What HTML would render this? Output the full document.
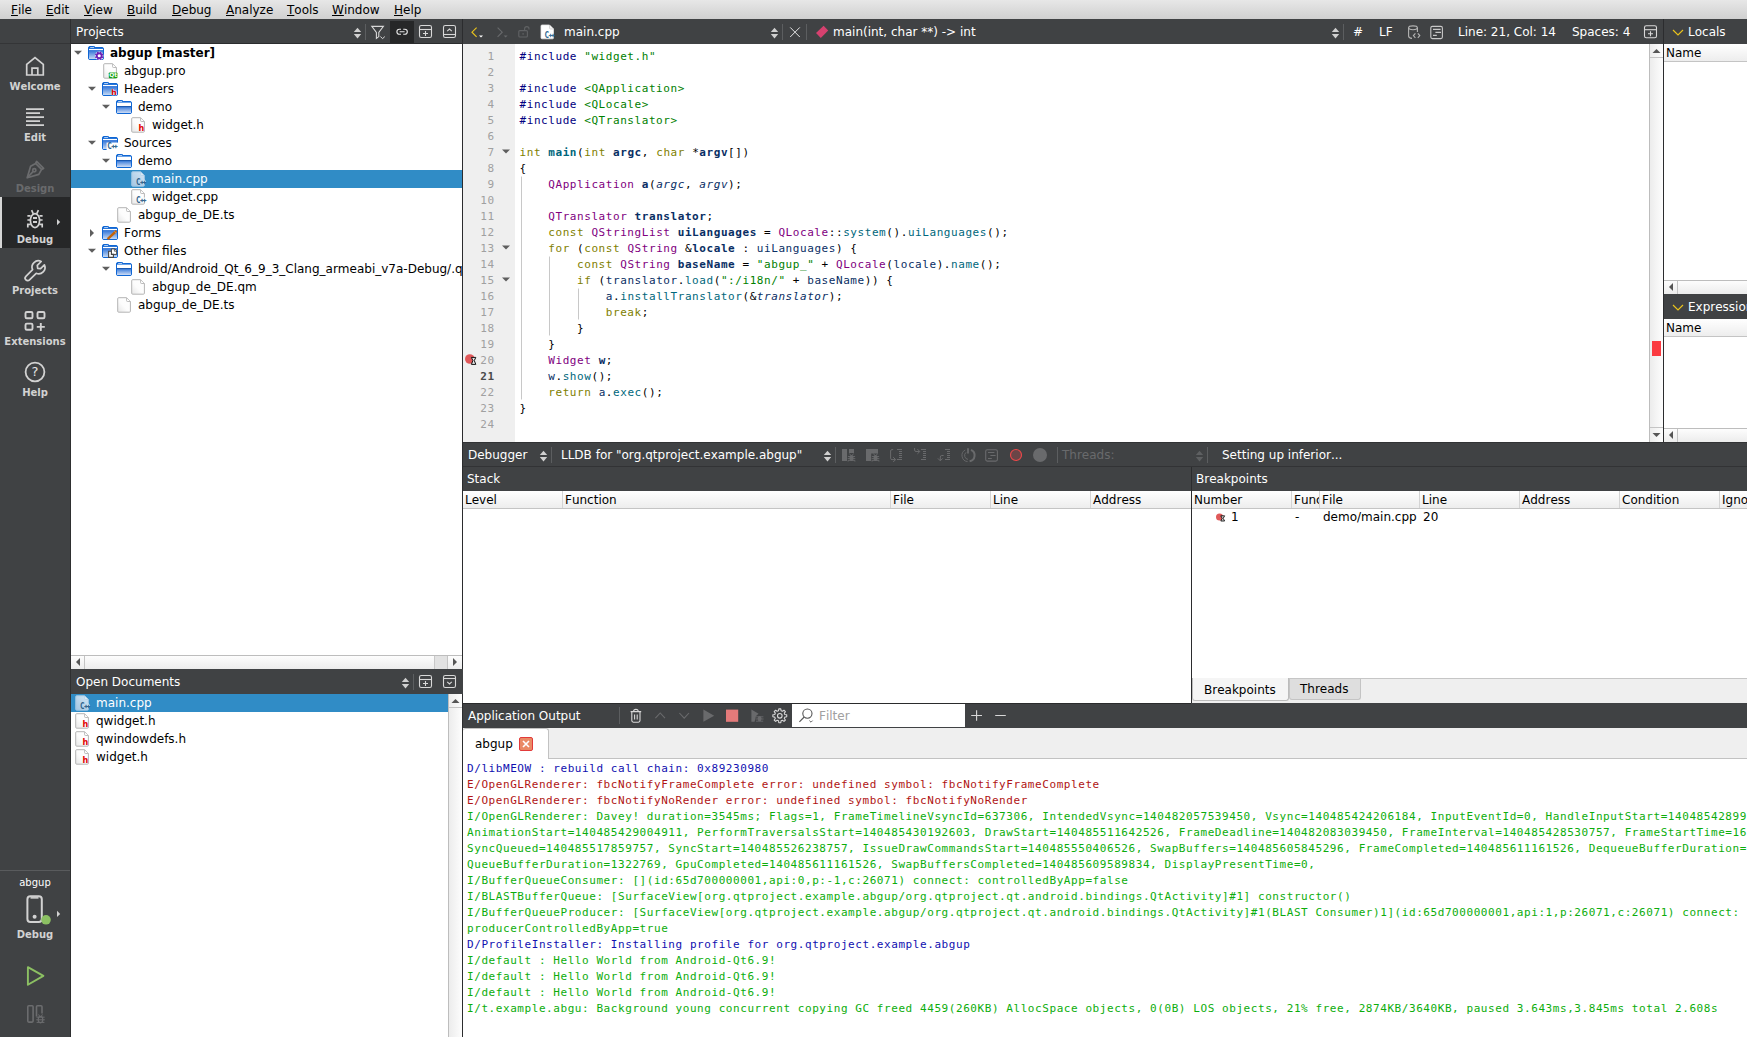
<!DOCTYPE html>
<html><head><meta charset="utf-8"><title>main.cpp @ abgup [master] - Qt Creator</title>
<style>
*{box-sizing:border-box;margin:0;padding:0}
html,body{width:1747px;height:1037px;overflow:hidden;background:#fff}
body{position:relative;font-family:"DejaVu Sans","Liberation Sans",sans-serif;font-size:12px;color:#000;line-height:1;font-kerning:none}
.abs{position:absolute}
.dark{background:#404244;color:#fff}
.mono{font-family:"DejaVu Sans Mono","Liberation Mono",monospace;letter-spacing:0.568px}
/* menubar */
#menubar{left:0;top:0;width:1747px;height:19px;background:linear-gradient(#e7e7e7,#d0d0d0)}
#menubar span{position:absolute;top:4px;font-size:12px;white-space:nowrap}
#menubar u{text-decoration:underline;text-underline-offset:1px}
/* sidebar */
#sidebar{left:0;top:19px;width:71px;height:1018px;background:#404244;border-right:1px solid #2e2f30}
.lbl{position:absolute;left:0;width:70px;text-align:center;color:#d2d2d2;font-weight:bold;font-size:10px;white-space:nowrap}
.lbl.dis{color:#696a6c}
.mode{position:absolute;left:0;width:70px;height:51px;text-align:center;color:#d0d0d0;font-weight:bold;font-size:10px}
.mode .lbl{position:absolute;left:0;width:70px;text-align:center;top:37px}
.mode svg{position:absolute;left:23px;top:8px}
.mode.sel{background:#262728;border-left:3px solid #d6d6d6}
.mode.dis{color:#6d6e70}
/* generic header bars */
.bar{background:#404244;color:#fff;white-space:nowrap}
.bar .t{position:absolute;top:7px;font-size:12px}
/* tree */
.row{position:absolute;left:0;height:18px;width:100%;white-space:nowrap}
.tx{position:absolute;font-size:12px;white-space:nowrap}
.row.sel{background:#308cc6;color:#fff}
/* header */
.hdr{position:absolute;height:18px;background:linear-gradient(#ffffff,#ededed);border-bottom:1px solid #c4c4c4;font-size:12px;white-space:nowrap;overflow:hidden}
.hdr span{position:absolute;top:0;height:17px;padding:3px 0 0 2px;border-left:1px solid #d4d4d4;overflow:hidden}
.hdr span:first-child{border-left:none}
/* code */
#code .ln{position:absolute;left:0;height:16px;white-space:pre;font-size:11px;line-height:16px}
#out .ln{position:absolute;left:4px;height:16px;white-space:pre;font-size:11px;line-height:16px}
</style></head><body>
<div id="menubar" class="abs">
<span style="left:11px"><u>F</u>ile</span><span style="left:46px"><u>E</u>dit</span><span style="left:84px"><u>V</u>iew</span><span style="left:127px"><u>B</u>uild</span><span style="left:172px"><u>D</u>ebug</span><span style="left:226px"><u>A</u>nalyze</span><span style="left:287px"><u>T</u>ools</span><span style="left:332px"><u>W</u>indow</span><span style="left:394px"><u>H</u>elp</span>
</div>
<div id="sidebar" class="abs">
<!-- coordinates inside sidebar are page-y minus 19 -->
<svg class="abs" style="left:0;top:0" width="70" height="1018" viewBox="0 19 70 1018" fill="none" stroke="#d2d2d2" stroke-width="1.7">
<rect x="0" y="197" width="70" height="51" fill="#262728" stroke="none"/>
<rect x="0" y="197" width="2" height="51" fill="#d6d6d6" stroke="none"/>
<!-- welcome -->
<path d="M26.7,75 V64.4 L35,57.6 L43.3,64.4 V75 Z M32,75 V68.2 H37.8 V75" stroke-linejoin="miter"/>
<!-- edit -->
<path d="M26,109.2 H44 M26,113.2 H40 M26,117.2 H44 M26,121.2 H40 M26,125.2 H44" stroke-width="1.8"/>
<!-- design (disabled) -->
<g stroke="#6b6c6e" stroke-width="1.7" stroke-linejoin="round">
<path d="M27.2,177.8 L30.6,166.2 L35.6,163.4 L41.6,169.4 L38.8,174.4 Z"/>
<path d="M35.6,163.4 L36.6,161.4 L43.6,168.4 L41.6,169.4"/>
<path d="M27.6,177.4 L33.2,171.4"/>
<circle cx="34.3" cy="170.2" r="1.6"/>
</g>
<!-- debug bug -->
<g stroke-width="1.7">
<ellipse cx="35" cy="220.6" rx="4.6" ry="7"/>
<path d="M33,218 H37 M33,222 H37" stroke-width="1.8"/>
<path d="M31.6,210.2 L33.2,213.6 M38.4,210.2 L36.8,213.6"/>
<path d="M27.4,215.9 H30.6 M27.4,220 H30.4 M27.8,227.6 V224.4 H30.8 M42.6,215.9 H39.4 M42.6,220 H39.6 M42.2,227.6 V224.4 H39.2"/>
</g>
<path d="M57,219 L60.2,222.1 L57,225.2 Z" fill="#d2d2d2" stroke="none"/>
<!-- projects wrench -->
<path d="M25.9,276.3 L32.6,269.7 A6.3,6.3 0 0 1 41.2,261.5 L37.3,265.4 L37.7,268.3 L40.6,268.7 L44.4,264.9 A6.3,6.3 0 0 1 36.2,273.3 L29.5,279.9 A2.5,2.5 0 0 1 25.9,276.3 Z" stroke-width="1.7" stroke-linejoin="round"/>
<!-- extensions -->
<g stroke-width="1.9">
<rect x="25.5" y="312" width="7" height="6.2" rx="1.3"/>
<rect x="37.5" y="312" width="7" height="6.2" rx="1.3"/>
<rect x="25.5" y="323.6" width="7" height="6.2" rx="1.3"/>
<path d="M36.8,326.9 H44.8 M40.8,322.9 V330.9"/>
</g>
<!-- help -->
<circle cx="35" cy="372" r="9.4" stroke-width="1.8"/>
<!-- kit selector phone -->
<g stroke-width="2">
<rect x="27.4" y="896.2" width="14.4" height="25.8" rx="3"/>
<path d="M30.5,897.6 H38.5" stroke-width="2.2" stroke="#c8c8c8"/>
<circle cx="34.6" cy="916.8" r="2" fill="#d2d2d2" stroke="none"/>
</g>
<circle cx="46" cy="919.8" r="4.8" fill="#8cc063" stroke="none"/>
<path d="M57,910.8 L60.2,913.9 L57,917 Z" fill="#d2d2d2" stroke="none"/>
<!-- run -->
<path d="M27.9,967.2 L43.4,975.9 L27.9,984.8 Z" stroke="#8cc063" stroke-width="1.9" stroke-linejoin="round"/>
<!-- debug run (disabled) -->
<g stroke="#6b6c6e" stroke-width="1.6">
<rect x="27.8" y="1005.8" width="5.3" height="16.3" rx="1"/>
<path d="M36.5,1016.4 V1006.8 Q36.5,1005.8 37.5,1005.8 H41 Q42,1005.8 42,1006.8 V1013.4"/>
<ellipse cx="40.5" cy="1019.6" rx="2.3" ry="3.2" stroke-width="1.2"/>
<path d="M36.4,1017.2 H44.6 M36.2,1019.8 H44.8 M36.6,1022.4 H44.4 M38.6,1014.4 L39.6,1016.2 M42.4,1014.4 L41.4,1016.2" stroke-width="1"/>
</g>
<path d="M0,870.5 H70" stroke="#595b5d" stroke-width="1"/><path d="M0,43.5 H70" stroke="#343537" stroke-width="1"/>
</svg>
<div class="lbl" style="top:63px">Welcome</div>
<div class="lbl" style="top:114px">Edit</div>
<div class="lbl dis" style="top:165px">Design</div>
<div class="lbl" style="top:216px">Debug</div>
<div class="lbl" style="top:267px">Projects</div>
<div class="lbl" style="top:318px">Extensions</div>
<div class="lbl" style="top:369px">Help</div>
<div class="lbl" style="top:346px;font-weight:normal;font-size:13px;color:#e4e4e4">?</div>
<div class="lbl" style="top:859px;font-weight:normal;font-size:10px;color:#fff">abgup</div>
<div class="lbl" style="top:911px">Debug</div>
</div>
<div class="abs bar" style="left:71px;top:19px;width:392px;height:25px;border-bottom:1px solid #2b2c2e"><span class="t" style="left:5px">Projects</span></div>
<div class="abs" style="left:462px;top:19px;width:1px;height:1018px;background:#2b2c2e"></div>
<div class="abs" style="left:390px;top:21px;width:24px;height:22px;background:#262728"></div>
<div class="abs" style="left:71px;top:44px;width:391px;height:611px;overflow:hidden;background:#fff">
<div class="tx" style="left:39px;top:3px;font-weight:bold;">abgup [master]</div>
<div class="tx" style="left:53px;top:21px;">abgup.pro</div>
<div class="tx" style="left:53px;top:39px;">Headers</div>
<div class="tx" style="left:67px;top:57px;">demo</div>
<div class="tx" style="left:81px;top:75px;">widget.h</div>
<div class="tx" style="left:53px;top:93px;">Sources</div>
<div class="tx" style="left:67px;top:111px;">demo</div>
<div class="row sel" style="top:126px"></div>
<div class="tx" style="left:81px;top:129px;color:#fff;">main.cpp</div>
<div class="tx" style="left:81px;top:147px;">widget.cpp</div>
<div class="tx" style="left:67px;top:165px;">abgup_de_DE.ts</div>
<div class="tx" style="left:53px;top:183px;">Forms</div>
<div class="tx" style="left:53px;top:201px;">Other files</div>
<div class="tx" style="left:67px;top:219px;">build/Android_Qt_6_9_3_Clang_armeabi_v7a-Debug/.qm</div>
<div class="tx" style="left:81px;top:237px;">abgup_de_DE.qm</div>
<div class="tx" style="left:67px;top:255px;">abgup_de_DE.ts</div>
</div>
<div class="abs" style="left:71px;top:655px;width:391px;height:14px;background:linear-gradient(#fdfdfd,#ececec);border-top:1px solid #bdbdbd"></div>
<div class="abs" style="left:84px;top:656px;width:1px;height:13px;background:#c4c4c4"></div>
<div class="abs" style="left:447px;top:656px;width:1px;height:13px;background:#c4c4c4"></div>
<div class="abs" style="left:434px;top:656px;width:13px;height:13px;background:#e2e2e2;border-left:1px solid #c8c8c8"></div>
<div class="abs bar" style="left:71px;top:669px;width:392px;height:25px"><span class="t" style="left:5px">Open Documents</span></div>
<div class="abs" style="left:71px;top:694px;width:391px;height:343px;overflow:hidden;background:#fff">
<div class="row sel" style="top:0;width:377px"></div>
<div class="tx" style="left:25px;top:3px;color:#fff;">main.cpp</div>
<div class="tx" style="left:25px;top:21px;">qwidget.h</div>
<div class="tx" style="left:25px;top:39px;">qwindowdefs.h</div>
<div class="tx" style="left:25px;top:57px;">widget.h</div>
</div>
<div class="abs" style="left:448px;top:694px;width:14px;height:343px;background:linear-gradient(90deg,#ececec,#fdfdfd);border-left:1px solid #bdbdbd"></div>
<div class="abs" style="left:449px;top:707px;width:13px;height:1px;background:#c4c4c4"></div>
<svg class="abs" style="left:0;top:0;pointer-events:none" width="1747" height="1037" viewBox="0 0 1747 1037"><defs>
<linearGradient id="fg" x1="0" y1="0" x2="0" y2="1"><stop offset="0" stop-color="#2a6fd6"/><stop offset="1" stop-color="#c4d9f4"/></linearGradient>
<linearGradient id="fg2" x1="0" y1="0" x2="0" y2="1"><stop offset="0" stop-color="#3d7edb"/><stop offset="1" stop-color="#cfddf5"/></linearGradient>
<linearGradient id="pg" x1="1" y1="0" x2="0" y2="1"><stop offset="0" stop-color="#ffffff"/><stop offset="0.55" stop-color="#fcfcfc"/><stop offset="1" stop-color="#e6e6e6"/></linearGradient>
<linearGradient id="pgs" x1="1" y1="0" x2="0" y2="1"><stop offset="0" stop-color="#d4e6f4"/><stop offset="1" stop-color="#a4c6e2"/></linearGradient>
</defs><path d="M353.8,31.9 H361.2 L357.5,27.7 Z" fill="#d0d0d0"/><path d="M353.8,34.1 H361.2 L357.5,38.4 Z" fill="#d0d0d0"/><path d="M365.5,24 V40" stroke="#5c5e60" stroke-width="1"/><path d="M371.8,26.4 H383.4 L378.8,32.4 V36.6 L376.4,38.4 V32.4 Z" fill="none" stroke="#d8d8d8" stroke-width="1.1" stroke-linejoin="miter"/><path d="M380.4,36.6 L382.6,38.6 L384.8,36.6" fill="none" stroke="#d8d8d8" stroke-width="1"/><path d="M401,29.2 H399.4 A2.5,2.5 0 0 0 399.4,34.2 H401 M403.2,29.2 H404.8 A2.5,2.5 0 0 1 404.8,34.2 H403.2 M399.6,31.7 H404.6" fill="none" stroke="#e8e8e8" stroke-width="1.15"/><g fill="none" stroke="#d8d8d8" stroke-width="1.1"><rect x="419.5" y="25.5" width="12" height="12" rx="1.8"/><path d="M419.5,29.5 H431.5"/><path d="M423,33.5 H428 M425.5,31 V36"/></g><g fill="none" stroke="#d8d8d8" stroke-width="1.1"><rect x="443.5" y="25.5" width="12" height="12" rx="1.8"/><path d="M443.5,34.5 H455.5"/><path d="M447.2,31.2 L449.5,29 L451.8,31.2"/></g><path d="M74,50.8 H82 L78,54.8 Z" fill="#5e5e5e"/><g transform="translate(88,46)"><path d="M0.5,12.3 V1.9 Q0.5,0.5 1.9,0.5 H5.8 Q6.8,0.5 7.1,1.5 H14.1 Q15.5,1.5 15.5,2.9 V12.3 Q15.5,13.5 14.1,13.5 H1.9 Q0.5,13.5 0.5,12.3 Z" fill="#0f66d4" stroke="#0f66d4" stroke-width="1"/><rect x="1" y="4.1" width="14" height="8.9" fill="url(#fg)"/><rect x="1" y="2.9" width="14" height="1.2" fill="#ffffff"/><rect x="2" y="1.2" width="4.2" height="0.8" rx="0.4" fill="#e4eefb"/><g transform="translate(11.2,9.8)" fill="none"><circle cx="0" cy="0" r="4.4" fill="#fff" fill-opacity="0.75"/><circle cx="0" cy="0" r="2.4" stroke="#6a1fb5" stroke-width="1.7" fill="#fff"/><path d="M2.59,1.07 L3.97,1.65" stroke="#6a1fb5" stroke-width="1.6"/><path d="M1.07,2.59 L1.65,3.97" stroke="#6a1fb5" stroke-width="1.6"/><path d="M-1.07,2.59 L-1.65,3.97" stroke="#6a1fb5" stroke-width="1.6"/><path d="M-2.59,1.07 L-3.97,1.65" stroke="#6a1fb5" stroke-width="1.6"/><path d="M-2.59,-1.07 L-3.97,-1.65" stroke="#6a1fb5" stroke-width="1.6"/><path d="M-1.07,-2.59 L-1.65,-3.97" stroke="#6a1fb5" stroke-width="1.6"/><path d="M1.07,-2.59 L1.65,-3.97" stroke="#6a1fb5" stroke-width="1.6"/><path d="M2.59,-1.07 L3.97,-1.65" stroke="#6a1fb5" stroke-width="1.6"/></g></g><g transform="translate(102,63)"><path d="M1.7,1.7 Q1.7,0.7 2.7,0.7 H10.6 L14.4,4.5 V14.2 Q14.4,15.2 13.4,15.2 H2.7 Q1.7,15.2 1.7,14.2 Z" fill="url(#pg)" stroke="#b4b4b4" stroke-width="1"/><path d="M10.6,0.9 V3.7 Q10.6,4.5 11.4,4.5 H14.2" fill="#fff" stroke="#b4b4b4" stroke-width="0.9"/><rect x="6.8" y="9.4" width="8.6" height="5.8" rx="0.8" fill="#14a014"/><text x="7.2" y="14.3" font-family="DejaVu Sans" font-weight="bold" font-size="5.9" fill="#fff">Qt</text></g><path d="M88,86.8 H96 L92,90.8 Z" fill="#5e5e5e"/><g transform="translate(102,82)"><path d="M0.5,12.3 V1.9 Q0.5,0.5 1.9,0.5 H5.8 Q6.8,0.5 7.1,1.5 H14.1 Q15.5,1.5 15.5,2.9 V12.3 Q15.5,13.5 14.1,13.5 H1.9 Q0.5,13.5 0.5,12.3 Z" fill="#0f66d4" stroke="#0f66d4" stroke-width="1"/><rect x="1" y="4.1" width="14" height="8.9" fill="url(#fg)"/><rect x="1" y="2.9" width="14" height="1.2" fill="#ffffff"/><rect x="2" y="1.2" width="4.2" height="0.8" rx="0.4" fill="#e4eefb"/><text x="9.2" y="13.3" font-family="DejaVu Sans" font-weight="bold" font-size="7.6" fill="#e00000" stroke="#fff" stroke-width="0.5" paint-order="stroke">h</text></g><path d="M102,104.8 H110 L106,108.8 Z" fill="#5e5e5e"/><g transform="translate(116,100)"><path d="M0.5,12.3 V1.9 Q0.5,0.5 1.9,0.5 H5.8 Q6.8,0.5 7.1,1.5 H14.1 Q15.5,1.5 15.5,2.9 V12.3 Q15.5,13.5 14.1,13.5 H1.9 Q0.5,13.5 0.5,12.3 Z" fill="#0f66d4" stroke="#0f66d4" stroke-width="1"/><rect x="1" y="7" width="14" height="6" fill="url(#fg2)"/><rect x="1" y="6" width="14" height="1.1" fill="#1c59b0"/><rect x="1" y="2.9" width="14" height="3.1" fill="#ffffff"/><rect x="1" y="2.2" width="14" height="0.8" fill="#7fb0ec"/><rect x="2" y="1.2" width="4.2" height="0.8" rx="0.4" fill="#e4eefb"/></g><g transform="translate(130,117)"><path d="M1.7,1.7 Q1.7,0.7 2.7,0.7 H10.6 L14.4,4.5 V14.2 Q14.4,15.2 13.4,15.2 H2.7 Q1.7,15.2 1.7,14.2 Z" fill="url(#pg)" stroke="#b4b4b4" stroke-width="1"/><path d="M10.6,0.9 V3.7 Q10.6,4.5 11.4,4.5 H14.2" fill="#fff" stroke="#b4b4b4" stroke-width="0.9"/><text x="8.4" y="14" font-family="DejaVu Sans" font-weight="bold" font-size="8" fill="#e00000">h</text></g><path d="M88,140.8 H96 L92,144.8 Z" fill="#5e5e5e"/><g transform="translate(102,136)"><path d="M0.5,12.3 V1.9 Q0.5,0.5 1.9,0.5 H5.8 Q6.8,0.5 7.1,1.5 H14.1 Q15.5,1.5 15.5,2.9 V12.3 Q15.5,13.5 14.1,13.5 H1.9 Q0.5,13.5 0.5,12.3 Z" fill="#0f66d4" stroke="#0f66d4" stroke-width="1"/><rect x="1" y="4.1" width="14" height="8.9" fill="url(#fg)"/><rect x="1" y="2.9" width="14" height="1.2" fill="#ffffff"/><rect x="2" y="1.2" width="4.2" height="0.8" rx="0.4" fill="#e4eefb"/><rect x="4.6" y="6.6" width="11.8" height="7.8" fill="#fff"/><text x="5.4" y="13.3" font-family="DejaVu Sans" font-weight="bold" font-size="8" fill="#2c5f8a" textLength="4.2" lengthAdjust="spacingAndGlyphs">C</text><text x="9.15" y="12.4" font-family="DejaVu Sans" font-weight="bold" font-size="4.8" fill="#2c5f8a" stroke="#2c5f8a" stroke-width="0.3">+</text><text x="11.65" y="12.4" font-family="DejaVu Sans" font-weight="bold" font-size="4.8" fill="#2c5f8a" stroke="#2c5f8a" stroke-width="0.3">+</text></g><path d="M102,158.8 H110 L106,162.8 Z" fill="#5e5e5e"/><g transform="translate(116,154)"><path d="M0.5,12.3 V1.9 Q0.5,0.5 1.9,0.5 H5.8 Q6.8,0.5 7.1,1.5 H14.1 Q15.5,1.5 15.5,2.9 V12.3 Q15.5,13.5 14.1,13.5 H1.9 Q0.5,13.5 0.5,12.3 Z" fill="#0f66d4" stroke="#0f66d4" stroke-width="1"/><rect x="1" y="7" width="14" height="6" fill="url(#fg2)"/><rect x="1" y="6" width="14" height="1.1" fill="#1c59b0"/><rect x="1" y="2.9" width="14" height="3.1" fill="#ffffff"/><rect x="1" y="2.2" width="14" height="0.8" fill="#7fb0ec"/><rect x="2" y="1.2" width="4.2" height="0.8" rx="0.4" fill="#e4eefb"/></g><g transform="translate(130,171)"><path d="M1.7,1.7 Q1.7,0.7 2.7,0.7 H10.6 L14.4,4.5 V14.2 Q14.4,15.2 13.4,15.2 H2.7 Q1.7,15.2 1.7,14.2 Z" fill="url(#pgs)" stroke="#9cc4e2" stroke-width="1"/><path d="M10.6,0.9 V3.7 Q10.6,4.5 11.4,4.5 H14.2" fill="#dbe9f5" stroke="#b4d2ea" stroke-width="0.9"/><path d="M13.4,8.6 H14.6 L16.2,10.6 L14.6,12.8 H13.4 Z" fill="#c6def0" stroke="none"/><text x="6.2" y="14" font-family="DejaVu Sans" font-weight="bold" font-size="8" fill="#2c5f8a" textLength="4.2" lengthAdjust="spacingAndGlyphs">C</text><text x="9.95" y="13.1" font-family="DejaVu Sans" font-weight="bold" font-size="4.8" fill="#2c5f8a" stroke="#2c5f8a" stroke-width="0.3">+</text><text x="12.45" y="13.1" font-family="DejaVu Sans" font-weight="bold" font-size="4.8" fill="#2c5f8a" stroke="#2c5f8a" stroke-width="0.3">+</text></g><g transform="translate(130,189)"><path d="M1.7,1.7 Q1.7,0.7 2.7,0.7 H10.6 L14.4,4.5 V14.2 Q14.4,15.2 13.4,15.2 H2.7 Q1.7,15.2 1.7,14.2 Z" fill="url(#pg)" stroke="#b4b4b4" stroke-width="1"/><path d="M10.6,0.9 V3.7 Q10.6,4.5 11.4,4.5 H14.2" fill="#fff" stroke="#b4b4b4" stroke-width="0.9"/><path d="M13.4,8.6 H14.6 L16.2,10.6 L14.6,12.8 H13.4 Z" fill="#fff" stroke="none"/><text x="6.2" y="14" font-family="DejaVu Sans" font-weight="bold" font-size="8" fill="#2c5f8a" textLength="4.2" lengthAdjust="spacingAndGlyphs">C</text><text x="9.95" y="13.1" font-family="DejaVu Sans" font-weight="bold" font-size="4.8" fill="#2c5f8a" stroke="#2c5f8a" stroke-width="0.3">+</text><text x="12.45" y="13.1" font-family="DejaVu Sans" font-weight="bold" font-size="4.8" fill="#2c5f8a" stroke="#2c5f8a" stroke-width="0.3">+</text></g><g transform="translate(116,207)"><path d="M1.7,1.7 Q1.7,0.7 2.7,0.7 H10.6 L14.4,4.5 V14.2 Q14.4,15.2 13.4,15.2 H2.7 Q1.7,15.2 1.7,14.2 Z" fill="url(#pg)" stroke="#b4b4b4" stroke-width="1"/><path d="M10.6,0.9 V3.7 Q10.6,4.5 11.4,4.5 H14.2" fill="#fff" stroke="#b4b4b4" stroke-width="0.9"/></g><path d="M90,229 V237 L94,233 Z" fill="#5e5e5e"/><g transform="translate(102,226)"><path d="M0.5,12.3 V1.9 Q0.5,0.5 1.9,0.5 H5.8 Q6.8,0.5 7.1,1.5 H14.1 Q15.5,1.5 15.5,2.9 V12.3 Q15.5,13.5 14.1,13.5 H1.9 Q0.5,13.5 0.5,12.3 Z" fill="#0f66d4" stroke="#0f66d4" stroke-width="1"/><rect x="1" y="4.1" width="14" height="8.9" fill="url(#fg)"/><rect x="1" y="2.9" width="14" height="1.2" fill="#ffffff"/><rect x="2" y="1.2" width="4.2" height="0.8" rx="0.4" fill="#e4eefb"/><path d="M5.6,13.2 L14.4,4.8" stroke="#c46408" stroke-width="2.5"/><path d="M12.6,5.4 L14,6.8" stroke="#e8c8a0" stroke-width="0.7"/></g><path d="M88,248.8 H96 L92,252.8 Z" fill="#5e5e5e"/><g transform="translate(102,244)"><path d="M0.5,12.3 V1.9 Q0.5,0.5 1.9,0.5 H5.8 Q6.8,0.5 7.1,1.5 H14.1 Q15.5,1.5 15.5,2.9 V12.3 Q15.5,13.5 14.1,13.5 H1.9 Q0.5,13.5 0.5,12.3 Z" fill="#0f66d4" stroke="#0f66d4" stroke-width="1"/><rect x="1" y="4.1" width="14" height="8.9" fill="url(#fg)"/><rect x="1" y="2.9" width="14" height="1.2" fill="#ffffff"/><rect x="2" y="1.2" width="4.2" height="0.8" rx="0.4" fill="#e4eefb"/><path d="M9.4,4.9 H12.8 L14.7,6.8 V10.4 H9.4 Z" fill="#fff" stroke="#444" stroke-width="1"/><path d="M12.4,5 V7.2 H14.6" fill="none" stroke="#444" stroke-width="0.8"/><path d="M6.6,7.2 H9.4 V10.4 H11.4 V13.4 H6.6 Z" fill="#fff" stroke="#444" stroke-width="1.1"/></g><path d="M102,266.8 H110 L106,270.8 Z" fill="#5e5e5e"/><g transform="translate(116,262)"><path d="M0.5,12.3 V1.9 Q0.5,0.5 1.9,0.5 H5.8 Q6.8,0.5 7.1,1.5 H14.1 Q15.5,1.5 15.5,2.9 V12.3 Q15.5,13.5 14.1,13.5 H1.9 Q0.5,13.5 0.5,12.3 Z" fill="#0f66d4" stroke="#0f66d4" stroke-width="1"/><rect x="1" y="7" width="14" height="6" fill="url(#fg2)"/><rect x="1" y="6" width="14" height="1.1" fill="#1c59b0"/><rect x="1" y="2.9" width="14" height="3.1" fill="#ffffff"/><rect x="1" y="2.2" width="14" height="0.8" fill="#7fb0ec"/><rect x="2" y="1.2" width="4.2" height="0.8" rx="0.4" fill="#e4eefb"/></g><g transform="translate(130,279)"><path d="M1.7,1.7 Q1.7,0.7 2.7,0.7 H10.6 L14.4,4.5 V14.2 Q14.4,15.2 13.4,15.2 H2.7 Q1.7,15.2 1.7,14.2 Z" fill="url(#pg)" stroke="#b4b4b4" stroke-width="1"/><path d="M10.6,0.9 V3.7 Q10.6,4.5 11.4,4.5 H14.2" fill="#fff" stroke="#b4b4b4" stroke-width="0.9"/></g><g transform="translate(116,297)"><path d="M1.7,1.7 Q1.7,0.7 2.7,0.7 H10.6 L14.4,4.5 V14.2 Q14.4,15.2 13.4,15.2 H2.7 Q1.7,15.2 1.7,14.2 Z" fill="url(#pg)" stroke="#b4b4b4" stroke-width="1"/><path d="M10.6,0.9 V3.7 Q10.6,4.5 11.4,4.5 H14.2" fill="#fff" stroke="#b4b4b4" stroke-width="0.9"/></g><path d="M80,658 V666 L76,662 Z" fill="#555555"/><path d="M453,658 V666 L457,662 Z" fill="#555555"/><path d="M401.8,681.9 H409.2 L405.5,677.7 Z" fill="#d0d0d0"/><path d="M401.8,684.1 H409.2 L405.5,688.4 Z" fill="#d0d0d0"/><path d="M413.5,674 V690" stroke="#5c5e60" stroke-width="1"/><g fill="none" stroke="#d8d8d8" stroke-width="1.1"><rect x="419.5" y="675.5" width="12" height="12" rx="1.8"/><path d="M419.5,679.5 H431.5"/><path d="M423,683.5 H428 M425.5,681 V686"/></g><g fill="none" stroke="#d8d8d8" stroke-width="1.1"><rect x="443.5" y="675.5" width="12" height="12" rx="1.8"/><path d="M443.5,678.5 H455.5"/><path d="M447.2,681.8 L449.5,684 L451.8,681.8"/></g><g transform="translate(74,695)"><path d="M1.7,1.7 Q1.7,0.7 2.7,0.7 H10.6 L14.4,4.5 V14.2 Q14.4,15.2 13.4,15.2 H2.7 Q1.7,15.2 1.7,14.2 Z" fill="url(#pgs)" stroke="#9cc4e2" stroke-width="1"/><path d="M10.6,0.9 V3.7 Q10.6,4.5 11.4,4.5 H14.2" fill="#dbe9f5" stroke="#b4d2ea" stroke-width="0.9"/><path d="M13.4,8.6 H14.6 L16.2,10.6 L14.6,12.8 H13.4 Z" fill="#c6def0" stroke="none"/><text x="6.2" y="14" font-family="DejaVu Sans" font-weight="bold" font-size="8" fill="#2c5f8a" textLength="4.2" lengthAdjust="spacingAndGlyphs">C</text><text x="9.95" y="13.1" font-family="DejaVu Sans" font-weight="bold" font-size="4.8" fill="#2c5f8a" stroke="#2c5f8a" stroke-width="0.3">+</text><text x="12.45" y="13.1" font-family="DejaVu Sans" font-weight="bold" font-size="4.8" fill="#2c5f8a" stroke="#2c5f8a" stroke-width="0.3">+</text></g><g transform="translate(74,713)"><path d="M1.7,1.7 Q1.7,0.7 2.7,0.7 H10.6 L14.4,4.5 V14.2 Q14.4,15.2 13.4,15.2 H2.7 Q1.7,15.2 1.7,14.2 Z" fill="url(#pg)" stroke="#b4b4b4" stroke-width="1"/><path d="M10.6,0.9 V3.7 Q10.6,4.5 11.4,4.5 H14.2" fill="#fff" stroke="#b4b4b4" stroke-width="0.9"/><text x="8.4" y="14" font-family="DejaVu Sans" font-weight="bold" font-size="8" fill="#e00000">h</text></g><g transform="translate(74,731)"><path d="M1.7,1.7 Q1.7,0.7 2.7,0.7 H10.6 L14.4,4.5 V14.2 Q14.4,15.2 13.4,15.2 H2.7 Q1.7,15.2 1.7,14.2 Z" fill="url(#pg)" stroke="#b4b4b4" stroke-width="1"/><path d="M10.6,0.9 V3.7 Q10.6,4.5 11.4,4.5 H14.2" fill="#fff" stroke="#b4b4b4" stroke-width="0.9"/><text x="8.4" y="14" font-family="DejaVu Sans" font-weight="bold" font-size="8" fill="#e00000">h</text></g><g transform="translate(74,749)"><path d="M1.7,1.7 Q1.7,0.7 2.7,0.7 H10.6 L14.4,4.5 V14.2 Q14.4,15.2 13.4,15.2 H2.7 Q1.7,15.2 1.7,14.2 Z" fill="url(#pg)" stroke="#b4b4b4" stroke-width="1"/><path d="M10.6,0.9 V3.7 Q10.6,4.5 11.4,4.5 H14.2" fill="#fff" stroke="#b4b4b4" stroke-width="0.9"/><text x="8.4" y="14" font-family="DejaVu Sans" font-weight="bold" font-size="8" fill="#e00000">h</text></g><path d="M451.5,703 H459.5 L455.5,699 Z" fill="#555555"/></svg>
<div class="abs bar" style="left:463px;top:19px;width:1200px;height:25px"></div>
<div class="abs" style="left:564px;top:26px;color:#fff;font-size:12px;white-space:nowrap;">main.cpp</div>
<div class="abs" style="left:833px;top:26px;color:#fff;font-size:12px;white-space:nowrap;">main(int, char **) -&gt; int</div>
<div class="abs" style="left:1353px;top:26px;color:#fff;font-size:12px;white-space:nowrap;">#</div>
<div class="abs" style="left:1379px;top:26px;color:#fff;font-size:12px;white-space:nowrap;">LF</div>
<div class="abs" style="left:1458px;top:26px;color:#fff;font-size:12px;white-space:nowrap;">Line: 21, Col: 14</div>
<div class="abs" style="left:1572px;top:26px;color:#fff;font-size:12px;white-space:nowrap;">Spaces: 4</div>
<div class="abs" style="left:463px;top:44px;width:1186px;height:398px;background:#fff"></div>
<div class="abs" style="left:463px;top:44px;width:52px;height:398px;background:#efefef"></div>
<div id="code" class="abs mono" style="left:463px;top:49px;width:1186px;height:393px;overflow:hidden">
<div class="ln" style="top:0px;left:0;width:31.6px;text-align:right;color:#a0a0a0;">1</div>
<div class="ln" style="top:0px;left:56.5px"><span style="color:#000080;">#include </span><span style="color:#008000;">"widget.h"</span></div>
<div class="ln" style="top:16px;left:0;width:31.6px;text-align:right;color:#a0a0a0;">2</div>
<div class="ln" style="top:32px;left:0;width:31.6px;text-align:right;color:#a0a0a0;">3</div>
<div class="ln" style="top:32px;left:56.5px"><span style="color:#000080;">#include </span><span style="color:#008000;">&lt;QApplication&gt;</span></div>
<div class="ln" style="top:48px;left:0;width:31.6px;text-align:right;color:#a0a0a0;">4</div>
<div class="ln" style="top:48px;left:56.5px"><span style="color:#000080;">#include </span><span style="color:#008000;">&lt;QLocale&gt;</span></div>
<div class="ln" style="top:64px;left:0;width:31.6px;text-align:right;color:#a0a0a0;">5</div>
<div class="ln" style="top:64px;left:56.5px"><span style="color:#000080;">#include </span><span style="color:#008000;">&lt;QTranslator&gt;</span></div>
<div class="ln" style="top:80px;left:0;width:31.6px;text-align:right;color:#a0a0a0;">6</div>
<div class="ln" style="top:96px;left:0;width:31.6px;text-align:right;color:#a0a0a0;">7</div>
<div class="ln" style="top:96px;left:56.5px"><span style="color:#808000;">int</span><span style="color:#000000;"> </span><span style="color:#00677c;font-weight:bold;">main</span><span style="color:#000000;">(</span><span style="color:#808000;">int</span><span style="color:#000000;"> </span><span style="color:#092e64;font-weight:bold;">argc</span><span style="color:#000000;">, </span><span style="color:#808000;">char</span><span style="color:#000000;"> *</span><span style="color:#092e64;font-weight:bold;">argv</span><span style="color:#000000;">[])</span></div>
<div class="ln" style="top:112px;left:0;width:31.6px;text-align:right;color:#a0a0a0;">8</div>
<div class="ln" style="top:112px;left:56.5px"><span style="color:#000000;">{</span></div>
<div class="ln" style="top:128px;left:0;width:31.6px;text-align:right;color:#a0a0a0;">9</div>
<div class="ln" style="top:128px;left:56.5px"><span style="color:#000000;">    </span><span style="color:#800080;">QApplication</span><span style="color:#000000;"> </span><span style="color:#092e64;font-weight:bold;">a</span><span style="color:#000000;">(</span><span style="color:#092e64;font-style:italic;">argc</span><span style="color:#000000;">, </span><span style="color:#092e64;font-style:italic;">argv</span><span style="color:#000000;">);</span></div>
<div class="ln" style="top:144px;left:0;width:31.6px;text-align:right;color:#a0a0a0;">10</div>
<div class="ln" style="top:160px;left:0;width:31.6px;text-align:right;color:#a0a0a0;">11</div>
<div class="ln" style="top:160px;left:56.5px"><span style="color:#000000;">    </span><span style="color:#800080;">QTranslator</span><span style="color:#000000;"> </span><span style="color:#092e64;font-weight:bold;">translator</span><span style="color:#000000;">;</span></div>
<div class="ln" style="top:176px;left:0;width:31.6px;text-align:right;color:#a0a0a0;">12</div>
<div class="ln" style="top:176px;left:56.5px"><span style="color:#000000;">    </span><span style="color:#808000;">const</span><span style="color:#000000;"> </span><span style="color:#800080;">QStringList</span><span style="color:#000000;"> </span><span style="color:#092e64;font-weight:bold;">uiLanguages</span><span style="color:#000000;"> = </span><span style="color:#800080;">QLocale</span><span style="color:#000000;">::</span><span style="color:#00677c;">system</span><span style="color:#000000;">().</span><span style="color:#00677c;">uiLanguages</span><span style="color:#000000;">();</span></div>
<div class="ln" style="top:192px;left:0;width:31.6px;text-align:right;color:#a0a0a0;">13</div>
<div class="ln" style="top:192px;left:56.5px"><span style="color:#000000;">    </span><span style="color:#808000;">for</span><span style="color:#000000;"> (</span><span style="color:#808000;">const</span><span style="color:#000000;"> </span><span style="color:#800080;">QString</span><span style="color:#000000;"> &amp;</span><span style="color:#092e64;font-weight:bold;">locale</span><span style="color:#000000;"> : </span><span style="color:#092e64;">uiLanguages</span><span style="color:#000000;">) {</span></div>
<div class="ln" style="top:208px;left:0;width:31.6px;text-align:right;color:#a0a0a0;">14</div>
<div class="ln" style="top:208px;left:56.5px"><span style="color:#000000;">        </span><span style="color:#808000;">const</span><span style="color:#000000;"> </span><span style="color:#800080;">QString</span><span style="color:#000000;"> </span><span style="color:#092e64;font-weight:bold;">baseName</span><span style="color:#000000;"> = </span><span style="color:#008000;">"abgup_"</span><span style="color:#000000;"> + </span><span style="color:#800080;">QLocale</span><span style="color:#000000;">(</span><span style="color:#092e64;">locale</span><span style="color:#000000;">).</span><span style="color:#00677c;">name</span><span style="color:#000000;">();</span></div>
<div class="ln" style="top:224px;left:0;width:31.6px;text-align:right;color:#a0a0a0;">15</div>
<div class="ln" style="top:224px;left:56.5px"><span style="color:#000000;">        </span><span style="color:#808000;">if</span><span style="color:#000000;"> (</span><span style="color:#092e64;">translator</span><span style="color:#000000;">.</span><span style="color:#00677c;">load</span><span style="color:#000000;">(</span><span style="color:#008000;">":/i18n/"</span><span style="color:#000000;"> + </span><span style="color:#092e64;">baseName</span><span style="color:#000000;">)) {</span></div>
<div class="ln" style="top:240px;left:0;width:31.6px;text-align:right;color:#a0a0a0;">16</div>
<div class="ln" style="top:240px;left:56.5px"><span style="color:#000000;">            </span><span style="color:#092e64;">a</span><span style="color:#000000;">.</span><span style="color:#00677c;">installTranslator</span><span style="color:#000000;">(&amp;</span><span style="color:#092e64;font-style:italic;">translator</span><span style="color:#000000;">);</span></div>
<div class="ln" style="top:256px;left:0;width:31.6px;text-align:right;color:#a0a0a0;">17</div>
<div class="ln" style="top:256px;left:56.5px"><span style="color:#000000;">            </span><span style="color:#808000;">break</span><span style="color:#000000;">;</span></div>
<div class="ln" style="top:272px;left:0;width:31.6px;text-align:right;color:#a0a0a0;">18</div>
<div class="ln" style="top:272px;left:56.5px"><span style="color:#000000;">        }</span></div>
<div class="ln" style="top:288px;left:0;width:31.6px;text-align:right;color:#a0a0a0;">19</div>
<div class="ln" style="top:288px;left:56.5px"><span style="color:#000000;">    }</span></div>
<div class="ln" style="top:304px;left:0;width:31.6px;text-align:right;color:#a0a0a0;">20</div>
<div class="ln" style="top:304px;left:56.5px"><span style="color:#000000;">    </span><span style="color:#800080;">Widget</span><span style="color:#000000;"> </span><span style="color:#092e64;font-weight:bold;">w</span><span style="color:#000000;">;</span></div>
<div class="ln" style="top:320px;left:0;width:31.6px;text-align:right;color:#4a4a4a;font-weight:bold;">21</div>
<div class="ln" style="top:320px;left:56.5px"><span style="color:#000000;">    </span><span style="color:#092e64;">w</span><span style="color:#000000;">.</span><span style="color:#00677c;">show</span><span style="color:#000000;">();</span></div>
<div class="ln" style="top:336px;left:0;width:31.6px;text-align:right;color:#a0a0a0;">22</div>
<div class="ln" style="top:336px;left:56.5px"><span style="color:#000000;">    </span><span style="color:#808000;">return</span><span style="color:#000000;"> </span><span style="color:#092e64;">a</span><span style="color:#000000;">.</span><span style="color:#00677c;">exec</span><span style="color:#000000;">();</span></div>
<div class="ln" style="top:352px;left:0;width:31.6px;text-align:right;color:#a0a0a0;">23</div>
<div class="ln" style="top:352px;left:56.5px"><span style="color:#000000;">}</span></div>
<div class="ln" style="top:368px;left:0;width:31.6px;text-align:right;color:#a0a0a0;">24</div>
</div>
<div class="abs" style="left:1649px;top:44px;width:14px;height:398px;background:linear-gradient(90deg,#ececec,#fdfdfd);border-left:1px solid #bdbdbd"></div>
<div class="abs" style="left:1650px;top:57px;width:13px;height:1px;background:#c4c4c4"></div>
<div class="abs" style="left:1650px;top:427px;width:13px;height:1px;background:#c4c4c4"></div>
<div class="abs" style="left:1652px;top:341px;width:9px;height:15px;background:#fb3b41"></div>
<div class="abs" style="left:1663px;top:19px;width:1px;height:424px;background:#2b2c2e"></div>
<svg class="abs" style="left:0;top:0;pointer-events:none" width="1747" height="1037" viewBox="0 0 1747 1037"><path d="M476.6,27.6 L472,32.2 L476.6,36.8" fill="none" stroke="#e9c31c" stroke-width="1.15"/><path d="M479,35.6 H483 L481,37.6 Z" fill="#ffffff"/><path d="M497.6,27.6 L502.2,32.2 L497.6,36.8" fill="none" stroke="#67696b" stroke-width="1.15"/><path d="M503.6,35.6 H507.6 L505.6,37.6 Z" fill="#67696b"/><g fill="none" stroke="#606264" stroke-width="1.1"><rect x="518.8" y="30.6" width="8.6" height="6.4" rx="1"/><path d="M524.6,30.4 V28.8 A2.2,2.2 0 0 1 529,28.8 V29.6"/><rect x="522.4" y="33.2" width="1.4" height="1.4" fill="#606264" stroke="none"/></g><g transform="translate(540.5,24.6)"><path d="M0.5,1.4 Q0.5,0.4 1.5,0.4 H9 L13,4.4 V13.2 Q13,14.2 12,14.2 H1.5 Q0.5,14.2 0.5,13.2 Z" fill="#fff" stroke="#e6e6e6" stroke-width="0.8"/><path d="M9,0.4 V3.4 Q9,4.4 10,4.4 H13" fill="#f4f4f4" stroke="#cfcfcf" stroke-width="0.8"/><text x="4.2" y="13.4" font-family="DejaVu Sans" font-weight="bold" font-size="8" fill="#2f6792" textLength="4.2" lengthAdjust="spacingAndGlyphs">C</text><text x="7.95" y="12.5" font-family="DejaVu Sans" font-weight="bold" font-size="4.8" fill="#2f6792" stroke="#2f6792" stroke-width="0.3">+</text><text x="10.45" y="12.5" font-family="DejaVu Sans" font-weight="bold" font-size="4.8" fill="#2f6792" stroke="#2f6792" stroke-width="0.3">+</text></g><path d="M770.8,31.9 H778.2 L774.5,27.7 Z" fill="#d0d0d0"/><path d="M770.8,34.1 H778.2 L774.5,38.4 Z" fill="#d0d0d0"/><path d="M782.5,24 V40 M806.5,24 V40 M1343.5,24 V40" stroke="#5c5e60" stroke-width="1"/><path d="M790.2,27.4 L799.8,37 M799.8,27.4 L790.2,37" stroke="#e4e4e4" stroke-width="1"/><path d="M816,33 L823.6,25.8 L828.2,30.6 L820.8,38 Z" fill="#d6416f"/><path d="M1331.8,31.9 H1339.2 L1335.5,27.7 Z" fill="#d0d0d0"/><path d="M1331.8,34.1 H1339.2 L1335.5,38.4 Z" fill="#d0d0d0"/><g fill="none" stroke="#b4b4b4" stroke-width="1.1"><ellipse cx="1413" cy="27.8" rx="4.4" ry="1.9"/><path d="M1408.6,27.8 V36 Q1408.6,38.2 1412,38.4 M1417.4,27.8 V32"/><path d="M1415.4,33.4 L1413.4,35.6 L1415.4,37.8 M1417.8,33.4 L1419.8,35.6 L1417.8,37.8"/></g><g fill="none" stroke="#c8c8c8" stroke-width="1.1"><rect x="1430.8" y="26.4" width="11.6" height="12.2" rx="1.6"/><path d="M1433,29.4 H1440.6 M1435.4,32.4 H1441 M1433,35.4 H1436.8"/></g><g fill="none" stroke="#d8d8d8" stroke-width="1.1"><rect x="1644.5" y="25.7" width="12" height="12" rx="1.8"/><path d="M1644.5,29.7 H1656.5"/><path d="M1648,33.7 H1653 M1650.5,31.2 V36.2"/></g><path d="M502,149.6 H510 L506,153.6 Z" fill="#5e5e5e"/><path d="M502,245.6 H510 L506,249.6 Z" fill="#5e5e5e"/><path d="M502,277.6 H510 L506,281.6 Z" fill="#5e5e5e"/><path d="M521.5,176.5 V399.5" stroke="#c8c8c8" stroke-width="1"/><path d="M549.5,256.5 V335.5" stroke="#c8c8c8" stroke-width="1"/><path d="M578.5,288.5 V319.5" stroke="#c8c8c8" stroke-width="1"/><circle cx="469.8" cy="359" r="4.8" fill="#e0585a"/><g stroke="#111" stroke-width="1" fill="#e8e8e8"><path d="M471.4,357.4 H475.8 L474.3,360.6 L475.8,364.4 H471.4 L472.9,360.6 Z"/></g><path d="M1652.5,53 H1660.5 L1656.5,49 Z" fill="#555555"/><path d="M1652.5,433 H1660.5 L1656.5,437 Z" fill="#555555"/></svg>
<div class="abs bar" style="left:1664px;top:19px;width:83px;height:25px"><span class="t" style="left:24px">Locals</span></div>
<div class="hdr" style="left:1664px;top:44px;width:83px"><span style="left:0;width:83px">Name</span></div>
<div class="abs" style="left:1664px;top:62px;width:83px;height:218px;background:#fff"></div>
<div class="abs" style="left:1664px;top:280px;width:83px;height:14px;background:linear-gradient(#fdfdfd,#ececec);border-top:1px solid #bdbdbd"></div>
<div class="abs" style="left:1677px;top:281px;width:1px;height:13px;background:#c4c4c4"></div>
<div class="abs bar" style="left:1664px;top:294px;width:83px;height:25px;overflow:hidden"><span class="t" style="left:24px">Expressions</span></div>
<div class="hdr" style="left:1664px;top:319px;width:83px"><span style="left:0;width:83px">Name</span></div>
<div class="abs" style="left:1664px;top:337px;width:83px;height:91px;background:#fff"></div>
<div class="abs" style="left:1664px;top:428px;width:83px;height:14px;background:linear-gradient(#fdfdfd,#ececec);border-top:1px solid #bdbdbd"></div>
<div class="abs" style="left:1677px;top:429px;width:1px;height:13px;background:#c4c4c4"></div>
<svg class="abs" style="left:0;top:0;pointer-events:none" width="1747" height="1037" viewBox="0 0 1747 1037"><path d="M1673,30 L1678,35 L1683,30" fill="none" stroke="#e9c31c" stroke-width="1.2"/><path d="M1673,283 V291 L1669,287 Z" fill="#555555"/><path d="M1673,305 L1678,310 L1683,305" fill="none" stroke="#e9c31c" stroke-width="1.2"/><path d="M1673,431 V439 L1669,435 Z" fill="#555555"/></svg>
<div class="abs" style="left:463px;top:442px;width:1284px;height:25px;background:#404244;border-top:1px solid #323335;border-bottom:1px solid #323335"></div>
<div class="abs" style="left:468px;top:449px;color:#fff;font-size:12px;white-space:nowrap">Debugger</div>
<div class="abs" style="left:561px;top:449px;color:#fff;font-size:12px;white-space:nowrap">LLDB for "org.qtproject.example.abgup"</div>
<div class="abs" style="left:1062px;top:449px;color:#696a6c;font-size:12px;white-space:nowrap">Threads:</div>
<div class="abs" style="left:1222px;top:449px;color:#fff;font-size:12px;white-space:nowrap">Setting up inferior...</div>
<div class="abs" style="left:463px;top:467px;width:728px;height:24px;background:#404244"></div>
<div class="abs" style="left:467px;top:473px;color:#fff;font-size:12px;white-space:nowrap">Stack</div>
<div class="abs" style="left:1192px;top:467px;width:555px;height:24px;background:#404244"></div>
<div class="abs" style="left:1196px;top:473px;color:#fff;font-size:12px;white-space:nowrap">Breakpoints</div>
<div class="abs" style="left:1191px;top:467px;width:1px;height:236px;background:#2b2c2e"></div>
<div class="hdr" style="left:463px;top:491px;width:728px"><span style="left:0px;width:99px">Level</span><span style="left:99px;width:328px">Function</span><span style="left:427px;width:100px">File</span><span style="left:527px;width:100px">Line</span><span style="left:627px;width:101px">Address</span></div>
<div class="hdr" style="left:1192px;top:491px;width:555px"><span style="left:0px;width:99px">Number</span><span style="left:99px;width:28px">Func</span><span style="left:127px;width:100px">File</span><span style="left:227px;width:100px">Line</span><span style="left:327px;width:100px">Address</span><span style="left:427px;width:100px">Condition</span><span style="left:527px;width:28px">Ignore</span></div>
<div class="abs" style="left:463px;top:509px;width:728px;height:194px;background:#fff"></div>
<div class="abs" style="left:1192px;top:509px;width:555px;height:169px;background:#fff"></div>
<div class="abs" style="left:1231px;top:511px;font-size:12px;white-space:nowrap">1</div>
<div class="abs" style="left:1295px;top:511px;font-size:12px;white-space:nowrap">-</div>
<div class="abs" style="left:1323px;top:511px;font-size:12px;white-space:nowrap">demo/main.cpp</div>
<div class="abs" style="left:1423px;top:511px;font-size:12px;white-space:nowrap">20</div>
<div class="abs" style="left:1192px;top:678px;width:555px;height:25px;background:#efefef;border-top:1px solid #c6c6c6"></div>
<div class="abs" style="left:1192px;top:678px;width:97px;height:23px;background:#f5f5f5;border:1px solid #bcbcbc;border-top:none;border-radius:0 0 3px 3px"></div>
<div class="abs" style="left:1289px;top:679px;width:72px;height:21px;background:#dedede;border:1px solid #c4c4c4;border-top:none;border-radius:0 0 3px 3px"></div>
<div class="abs" style="left:1204px;top:684px;font-size:12px">Breakpoints</div>
<div class="abs" style="left:1300px;top:683px;font-size:12px">Threads</div>
<svg class="abs" style="left:0;top:0;pointer-events:none" width="1747" height="1037" viewBox="0 0 1747 1037"><path d="M539.8,454.9 H547.2 L543.5,450.7 Z" fill="#d0d0d0"/><path d="M539.8,457.1 H547.2 L543.5,461.4 Z" fill="#d0d0d0"/><path d="M823.8,454.9 H831.2 L827.5,450.7 Z" fill="#d0d0d0"/><path d="M823.8,457.1 H831.2 L827.5,461.4 Z" fill="#d0d0d0"/><path d="M1195.8,454.9 H1203.2 L1199.5,450.7 Z" fill="#5e6062"/><path d="M1195.8,457.1 H1203.2 L1199.5,461.4 Z" fill="#5e6062"/><path d="M551.5,447 V463 M835.5,447 V463 M1057.5,447 V463 M1207.5,447 V463" stroke="#5c5e60" stroke-width="1"/><rect x="842" y="449" width="5" height="12" fill="#696a6c"/><rect x="849" y="449" width="5" height="4" fill="#696a6c"/><g stroke="#696a6c" fill="#696a6c"><ellipse cx="851.5" cy="458" rx="2" ry="3" stroke="none"/><path d="M849.6,453.6 L850.7,455.4 M853.4,453.6 L852.3,455.4" stroke-width="0.9" fill="none"/><path d="M847.9,456.5 H855.1 M847.7,458.6 H855.3 M848.1,461.6 V460.4 H854.9 V461.6" stroke-width="0.9" fill="none"/></g><path d="M866,449 H878 V453.6 H871.2 V461 H866 Z" fill="#696a6c"/><g stroke="#696a6c" fill="#696a6c"><ellipse cx="875.5" cy="458" rx="2" ry="3" stroke="none"/><path d="M873.6,453.6 L874.7,455.4 M877.4,453.6 L876.3,455.4" stroke-width="0.9" fill="none"/><path d="M871.9,456.5 H879.1 M871.7,458.6 H879.3 M872.1,461.6 V460.4 H878.9 V461.6" stroke-width="0.9" fill="none"/></g><g fill="none" stroke="#696a6c" stroke-width="1"><path d="M893.2,449.6 H892 Q890.6,449.6 890.6,451 V458.2 Q890.6,459.6 892,459.6 H895.4 M893.2,457.2 L895.6,459.6 L893.2,462"/></g><path d="M897,449.5 H902 M899,451.5 H902 M899,453.5 H902 M899,455.5 H902 M899,457.5 H902 M897,459.5 H902 " stroke="#696a6c" stroke-width="1" fill="none"/><g fill="none" stroke="#696a6c" stroke-width="1"><path d="M914.6,448 V450 Q914.6,451.5 916,451.5 H919.6 M917.4,449.1 L919.8,451.5 L917.4,453.9"/></g><path d="M921,449.5 H926 M923,451.5 H926 M923,453.5 H926 M923,455.5 H926 M923,457.5 H926 M921,459.5 H926 " stroke="#696a6c" stroke-width="1" fill="none"/><g fill="none" stroke="#696a6c" stroke-width="1"><path d="M943.6,455.5 H941.8 Q940.3,455.5 940.3,457 V460.6 M937.9,458.4 L940.3,460.8 L942.7,458.4"/></g><path d="M945,449.5 H950 M947,451.5 H950 M947,453.5 H950 M947,455.5 H950 M947,457.5 H950 M945,459.5 H950 " stroke="#696a6c" stroke-width="1" fill="none"/><g fill="none" stroke="#696a6c"><path d="M968,448.2 V453.6" stroke-width="1.8"/><path d="M971,449.8 A6,6 0 0 1 969.6,461.2" stroke-width="2"/><path d="M965.2,450 A6.2,6.2 0 0 0 967.6,461.6" stroke-width="0.9"/><path d="M966,452.4 A4,4 0 0 0 968,459.4" stroke-width="0.9"/></g><g fill="none" stroke="#696a6c" stroke-width="1.1"><rect x="985.7" y="449.7" width="11.7" height="11.4" rx="1.6"/><path d="M988,452.5 H994.4 M990.4,455.5 H995.6 M988,458.5 H991.8"/></g><circle cx="1016" cy="455" r="5.5" fill="#6b4547" stroke="#e8484a" stroke-width="1.2"/><circle cx="1040" cy="455" r="7" fill="#696a6c"/><circle cx="1219.6" cy="517" r="3.6" fill="#e05a5a"/><g stroke="#111" stroke-width="0.9" fill="#ddd"><path d="M1220.8,515.8 H1224.6 L1223.2,518.4 L1224.6,521 H1220.8 L1222.2,518.4 Z"/></g></svg>
<div class="abs" style="left:463px;top:703px;width:1284px;height:25px;background:#404244"></div>
<div class="abs" style="left:463px;top:703px;width:728px;height:1px;background:#2a2b2c"></div>
<div class="abs" style="left:468px;top:710px;color:#fff;font-size:12px;white-space:nowrap">Application Output</div>
<div class="abs" style="left:792px;top:704px;width:173px;height:23px;background:#fff"></div>
<div class="abs" style="left:819px;top:710px;color:#a0a0a0;font-size:12px">Filter</div>
<div class="abs" style="left:463px;top:728px;width:1284px;height:31px;background:#efefef;border-bottom:1px solid #c2c2c2"></div>
<div class="abs" style="left:463px;top:728px;width:86px;height:31px;background:#fff;border:1px solid #c2c2c2;border-bottom:none;border-left:none;border-radius:3px 3px 0 0"></div>
<div class="abs" style="left:475px;top:738px;font-size:12px">abgup</div>
<div class="abs" style="left:519px;top:737px;width:14px;height:14px;background:#ea8a66;border:1px solid #e23a3a;border-radius:2px"></div>
<div class="abs" style="left:463px;top:759px;width:1284px;height:278px;background:#fff"></div>
<div id="out" class="abs mono" style="left:463px;top:761px;width:1284px;height:276px;overflow:hidden">
<div class="ln" style="top:0px;color:#1010b0">D/libMEOW : rebuild call chain: 0x89230980</div>
<div class="ln" style="top:16px;color:#b01414">E/OpenGLRenderer: fbcNotifyFrameComplete error: undefined symbol: fbcNotifyFrameComplete</div>
<div class="ln" style="top:32px;color:#b01414">E/OpenGLRenderer: fbcNotifyNoRender error: undefined symbol: fbcNotifyNoRender</div>
<div class="ln" style="top:48px;color:#0cad0c">I/OpenGLRenderer: Davey! duration=3545ms; Flags=1, FrameTimelineVsyncId=637306, IntendedVsync=140482057539450, Vsync=140485424206184, InputEventId=0, HandleInputStart=14048542899</div>
<div class="ln" style="top:64px;color:#0cad0c">AnimationStart=140485429004911, PerformTraversalsStart=140485430192603, DrawStart=140485511642526, FrameDeadline=140482083039450, FrameInterval=140485428530757, FrameStartTime=16</div>
<div class="ln" style="top:80px;color:#0cad0c">SyncQueued=140485517859757, SyncStart=140485526238757, IssueDrawCommandsStart=140485550406526, SwapBuffers=140485605845296, FrameCompleted=140485611161526, DequeueBufferDuration=</div>
<div class="ln" style="top:96px;color:#0cad0c">QueueBufferDuration=1322769, GpuCompleted=140485611161526, SwapBuffersCompleted=140485609589834, DisplayPresentTime=0,</div>
<div class="ln" style="top:112px;color:#0cad0c">I/BufferQueueConsumer: [](id:65d700000001,api:0,p:-1,c:26071) connect: controlledByApp=false</div>
<div class="ln" style="top:128px;color:#0cad0c">I/BLASTBufferQueue: [SurfaceView[org.qtproject.example.abgup/org.qtproject.qt.android.bindings.QtActivity]#1] constructor()</div>
<div class="ln" style="top:144px;color:#0cad0c">I/BufferQueueProducer: [SurfaceView[org.qtproject.example.abgup/org.qtproject.qt.android.bindings.QtActivity]#1(BLAST Consumer)1](id:65d700000001,api:1,p:26071,c:26071) connect:</div>
<div class="ln" style="top:160px;color:#0cad0c">producerControlledByApp=true</div>
<div class="ln" style="top:176px;color:#1010b0">D/ProfileInstaller: Installing profile for org.qtproject.example.abgup</div>
<div class="ln" style="top:192px;color:#0cad0c">I/default : Hello World from Android-Qt6.9!</div>
<div class="ln" style="top:208px;color:#0cad0c">I/default : Hello World from Android-Qt6.9!</div>
<div class="ln" style="top:224px;color:#0cad0c">I/default : Hello World from Android-Qt6.9!</div>
<div class="ln" style="top:240px;color:#0cad0c">I/t.example.abgu: Background young concurrent copying GC freed 4459(260KB) AllocSpace objects, 0(0B) LOS objects, 21% free, 2874KB/3640KB, paused 3.643ms,3.845ms total 2.608s</div>
</div>
<svg class="abs" style="left:0;top:0;pointer-events:none" width="1747" height="1037" viewBox="0 0 1747 1037"><path d="M619.5,707 V724" stroke="#5c5e60" stroke-width="1"/><g fill="none" stroke="#d8d8d8" stroke-width="1.1"><path d="M630.6,711.6 H641.2 M633.6,711.4 Q633.6,709.4 635.9,709.4 Q638.2,709.4 638.2,711.4"/><path d="M631.8,712 V720.6 Q631.8,722.2 633.4,722.2 H638.4 Q640,722.2 640,720.6 V712"/><path d="M634.6,714.4 V719.6 M637.2,714.4 V719.6"/></g><path d="M655.4,718.2 L660.2,713 L665,718.2" fill="none" stroke="#696a6c" stroke-width="1.1"/><path d="M679.4,713 L684.2,718.2 L689,713" fill="none" stroke="#696a6c" stroke-width="1.1"/><path d="M703.4,709.6 L714.2,715.7 L703.4,721.8 Z" fill="#696a6c"/><rect x="726" y="709.6" width="12.2" height="12.2" fill="#e47a7a"/><path d="M751.4,709.6 L758.6,713.8 L756,716 L754.6,721.8 H751.4 Z" fill="#696a6c"/><g stroke="#696a6c" fill="#696a6c"><ellipse cx="759.6" cy="718.6" rx="1.9" ry="2.7" stroke="none"/><path d="M755.8,716.8 H763.4 M755.6,719 H763.6 M756,721.2 H763.2" stroke-width="0.9" fill="none"/></g><path d="M778.81,708.87 L780.79,708.87 L781.09,710.76 L782.45,711.32 L784.00,710.20 L785.40,711.60 L784.28,713.15 L784.84,714.51 L786.73,714.81 L786.73,716.79 L784.84,717.09 L784.28,718.45 L785.40,720.00 L784.00,721.40 L782.45,720.28 L781.09,720.84 L780.79,722.73 L778.81,722.73 L778.51,720.84 L777.15,720.28 L775.60,721.40 L774.20,720.00 L775.32,718.45 L774.76,717.09 L772.87,716.79 L772.87,714.81 L774.76,714.51 L775.32,713.15 L774.20,711.60 L775.60,710.20 L777.15,711.32 L778.51,710.76 Z" fill="none" stroke="#d8d8d8" stroke-width="1.1" stroke-linejoin="round"/><circle cx="779.8" cy="715.8" r="2.3" fill="none" stroke="#d8d8d8" stroke-width="1.1"/><g fill="none" stroke="#555" stroke-width="1.1"><circle cx="807.4" cy="713.6" r="4.6"/><path d="M804.2,717 L799.4,721.8"/><path d="M809.4,720.6 L811,722.2 L812.6,720.6" stroke-width="0.9"/></g><path d="M971.2,715.5 H982 M976.6,710.2 V720.8 M995.2,715.5 H1005.8" stroke="#d8d8d8" stroke-width="1.1"/><path d="M523,741 L529,747 M529,741 L523,747" stroke="#fff" stroke-width="1.6"/></svg>

</body></html>
